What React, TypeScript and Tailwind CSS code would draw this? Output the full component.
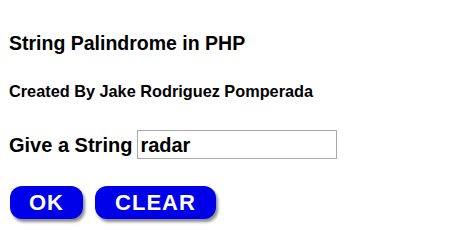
export default function App() {
  return (
    <div className="h-[240px] w-[458px] bg-white pl-[9px] font-['Liberation_Sans',Arial,sans-serif] font-bold text-black">
      <h1 className="pt-[31px] text-[19.5px] leading-[24px]">String Palindrome in PHP</h1>
      <p className="mt-[26px] text-[16.3px] leading-[20px]">Created By Jake Rodriguez Pomperada</p>
      <div className="mt-[29px] flex items-center gap-[5px]">
        <span className="text-[20px] leading-[24px]">Give a String</span>
        <input
          defaultValue="radar"
          className="h-[29px] w-[200px] border border-[#a9a9a9] px-[2px] text-[20px] font-bold outline-none"
        />
      </div>
      <div className="mt-[27px] ml-[1px] flex gap-[12px]">
        <button className="h-[33px] w-[73px] rounded-[12px] bg-[#0000e8] text-[22px] tracking-[1px] text-white shadow-[2px_3px_3px_rgba(0,0,0,0.45)]">
          OK
        </button>
        <button className="h-[33px] w-[121px] rounded-[12px] bg-[#0000e8] text-[22px] tracking-[1px] text-white shadow-[2px_3px_3px_rgba(0,0,0,0.45)]">
          CLEAR
        </button>
      </div>
    </div>
  );
}
